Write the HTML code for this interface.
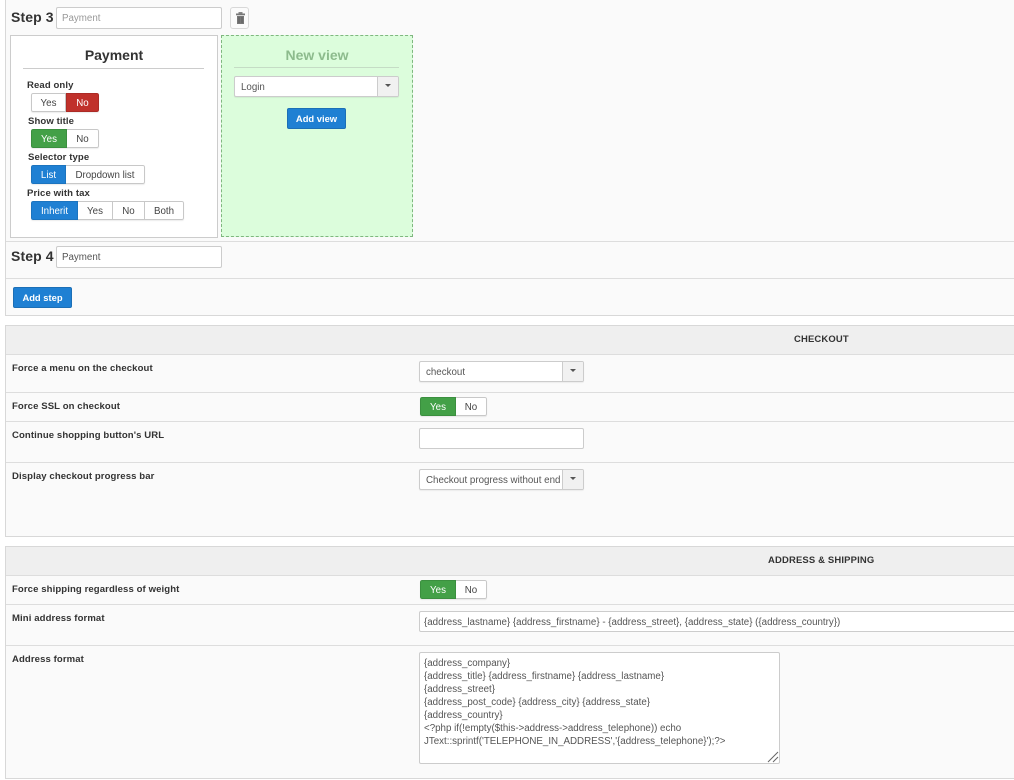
<!DOCTYPE html>
<html><head><meta charset="utf-8"><style>
html,body{margin:0;padding:0;background:#fff}
body{width:1014px;height:780px;position:relative;overflow:hidden;font-family:"Liberation Sans",sans-serif;font-size:10px;color:#333}
.a,.a *{box-sizing:border-box}
.a{position:absolute}
.l{position:absolute;height:1px;background:#ddd;left:6px;right:0}
.lab{position:absolute;font-weight:bold;font-size:9.55px;line-height:12px;color:#333;white-space:nowrap;letter-spacing:.1px}
.panel{position:absolute;box-sizing:border-box;left:5px;right:-5px;background:#fafafa;border:1px solid #d8d8d8}
.inp{position:absolute;background:#fff;border:1px solid #ccc;border-radius:2px;font-size:9.75px;line-height:21px;padding-left:5px;color:#555;white-space:nowrap;overflow:hidden}
.sel{position:absolute;background:#fff;border:1px solid #ccc;border-radius:2px;height:21px;font-size:9.75px;line-height:21px;padding-left:6px;color:#555;white-space:nowrap;overflow:hidden;box-shadow:0 1px 1px rgba(0,0,0,.06)}
.sel b{position:absolute;right:0;top:0;bottom:0;width:21px;background:#f1f1f1;border-left:1px solid #ccc}
.sel b:after{content:"";position:absolute;left:7px;top:7px;border:3px solid transparent;border-top:3px solid #555;border-bottom:0}
.grp{position:absolute;display:flex;height:19px;font-size:9.75px;color:#444;border-radius:2px;background:#fff;overflow:hidden;box-shadow:0 1px 1px rgba(0,0,0,.08)}
.grp span{display:block;box-sizing:border-box;text-align:center;border:1px solid #c8c8c8;border-left:0;height:19px;line-height:19px}
.grp span:first-child{border-left:1px solid #c8c8c8;border-radius:2px 0 0 2px}
.grp span:last-child{border-radius:0 2px 2px 0}
.grp span.g{background:#43a047;color:#fff;border:1px solid #3b8f3f}
.grp span.r{background:#c0312b;color:#fff;border:1px solid #ab2b26}
.grp span.bl{background:#1f80d3;color:#fff;border:1px solid #1c74bf}
.btn{position:absolute;background:#1f80d3;border:1px solid #1c6fb6;border-radius:2px;color:#fff;font-size:9.4px;font-weight:bold;text-align:center;height:21px;line-height:20px}
.h{position:absolute;font-weight:bold;white-space:nowrap}
.sect{position:absolute;font-weight:bold;font-size:9.45px;color:#333;white-space:nowrap;letter-spacing:.17px}
</style></head><body>

<div class="panel" style="top:-2px;height:318px"></div>
<div class="l" style="top:241px"></div>
<div class="l" style="top:278px"></div>

<div class="h" style="left:11px;top:8px;font-size:14px;line-height:18px;color:#333;letter-spacing:.1px">Step 3</div>
<div class="inp a" style="left:56px;top:7px;width:166px;height:22px;color:#999;line-height:21px">Payment</div>
<div class="a" style="left:230px;top:7px;width:19px;height:22px;border:1px solid #d8d8d8;border-radius:3px;background:#fbfbfb">
<svg width="17" height="20" viewBox="0 0 17 20" style="position:absolute;left:0;top:0"><path d="M6 8h7v8h-7z" fill="#777"/><rect x="5" y="5.500" width="9" height="1.800" fill="#777"/><rect x="7.500" y="4" width="4" height="1.500" fill="#888"/><path d="M8 9v6M11 9v6" stroke="#555" stroke-width=".7"/></svg></div>

<div class="a" style="left:10px;top:35px;width:208px;height:203px;background:#fff;border:1px solid #ccc"></div>
<div class="h" style="left:10px;top:46px;width:208px;text-align:center;font-size:14px;line-height:18px;color:#333">Payment</div>
<div class="a" style="left:23px;top:68px;width:181px;height:1px;background:#ccc"></div>

<div class="lab" style="left:27px;top:80px">Read only</div>
<div class="grp" style="left:31px;top:93px;width:68px"><span style="width:35px">Yes</span><span class="r" style="width:33px">No</span></div>
<div class="lab" style="left:28px;top:116px">Show title</div>
<div class="grp" style="left:31px;top:129px;width:68px"><span class="g" style="width:36px">Yes</span><span style="width:32px">No</span></div>
<div class="lab" style="left:28px;top:152px">Selector type</div>
<div class="grp" style="left:31px;top:165px;width:114px"><span class="bl" style="width:35px">List</span><span style="width:79px">Dropdown list</span></div>
<div class="lab" style="left:27px;top:188px">Price with tax</div>
<div class="grp" style="left:31px;top:201px;width:153px"><span class="bl" style="width:47px">Inherit</span><span style="width:35px">Yes</span><span style="width:32px">No</span><span style="width:39px">Both</span></div>

<div class="a" style="left:221px;top:35px;width:192px;height:202px;background:#dcfddc;border:1px dashed #7fb77f"></div>
<div class="h" style="left:221px;top:46px;width:192px;text-align:center;font-size:14px;line-height:18px;color:#8dbb8d">New view</div>
<div class="a" style="left:234px;top:67px;width:165px;height:1px;background:#c5dcc5"></div>
<div class="sel a" style="left:234px;top:76px;width:165px">Login<b></b></div>
<div class="btn a" style="left:287px;top:108px;width:59px">Add view</div>

<div class="h" style="left:11px;top:247px;font-size:14px;line-height:18px;color:#333;letter-spacing:.1px">Step 4</div>
<div class="inp a" style="left:56px;top:246px;width:166px;height:22px;line-height:21px">Payment</div>
<div class="btn a" style="left:13px;top:287px;width:59px">Add step</div>

<div class="panel" style="top:325px;height:212px"></div>
<div class="a" style="left:6px;right:0;top:326px;height:28px;background:#efefef"></div>
<div class="l" style="top:354px"></div>
<div class="l" style="top:392px"></div>
<div class="l" style="top:421px"></div>
<div class="l" style="top:462px"></div>
<div class="sect" style="left:794px;top:334px">CHECKOUT</div>
<div class="lab" style="left:12px;top:363px">Force a menu on the checkout</div>
<div class="sel a" style="left:419px;top:361px;width:165px">checkout<b></b></div>
<div class="lab" style="left:12px;top:401px">Force SSL on checkout</div>
<div class="grp" style="left:420px;top:397px;width:67px"><span class="g" style="width:36px">Yes</span><span style="width:31px">No</span></div>
<div class="lab" style="left:12px;top:430px">Continue shopping button's URL</div>
<div class="inp a" style="left:419px;top:428px;width:165px;height:21px"></div>
<div class="lab" style="left:12px;top:471px">Display checkout progress bar</div>
<div class="sel a" style="left:419px;top:469px;width:165px">Checkout progress without end<b></b></div>

<div class="panel" style="top:546px;height:233px"></div>
<div class="a" style="left:6px;right:0;top:547px;height:28px;background:#efefef"></div>
<div class="l" style="top:575px"></div>
<div class="l" style="top:604px"></div>
<div class="l" style="top:645px"></div>
<div class="sect" style="left:768px;top:555px">ADDRESS &amp; SHIPPING</div>
<div class="lab" style="left:12px;top:584px">Force shipping regardless of weight</div>
<div class="grp" style="left:420px;top:580px;width:67px"><span class="g" style="width:36px">Yes</span><span style="width:31px">No</span></div>
<div class="lab" style="left:12px;top:613px">Mini address format</div>
<div class="inp a" style="left:419px;top:611px;width:620px;height:21px;padding-left:4px;line-height:21px">{address_lastname} {address_firstname} - {address_street}, {address_state} ({address_country})</div>
<div class="lab" style="left:12px;top:654px">Address format</div>
<div class="a" style="left:419px;top:652px;width:361px;height:112px;background:#fff;border:1px solid #ccc;border-radius:2px;padding:4px;font-size:9.75px;line-height:13px;color:#555;white-space:pre">{address_company}
{address_title} {address_firstname} {address_lastname}
{address_street}
{address_post_code} {address_city} {address_state}
{address_country}
&lt;?php if(!empty($this-&gt;address-&gt;address_telephone)) echo
JText::sprintf('TELEPHONE_IN_ADDRESS','{address_telephone}');?&gt;
<svg width="12" height="12" viewBox="0 0 12 12" style="position:absolute;right:0;bottom:0"><path d="M1 11L11 1M6 11L11 6" stroke="#666" stroke-width="1" fill="none"/></svg></div>

</body></html>
